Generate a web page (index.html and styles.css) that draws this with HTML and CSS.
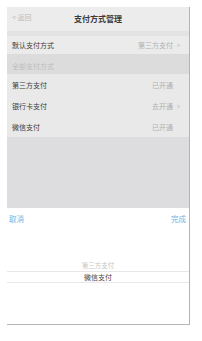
FILE: index.html
```html
<!DOCTYPE html>
<html lang="zh-CN">
<head>
<meta charset="utf-8">
<link rel="stylesheet" href="styles.css">
</head>
<body>
<div class="screen">
  <div class="nav">
    <span class="back">&lt; 返回</span>
    <span class="title">支付方式管理</span>
  </div>
  <div class="gap"></div>
  <div class="row default">
    <span class="label">默认支付方式</span>
    <span class="value">第三方支付<span class="chev">&gt;</span></span>
  </div>
  <div class="section">全部支付方式</div>
  <div class="row">
    <span class="label">第三方支付</span>
    <span class="value">已开通<span class="chev"></span></span>
  </div>
  <div class="row">
    <span class="label">银行卡支付</span>
    <span class="value">去开通<span class="chev">&gt;</span></span>
  </div>
  <div class="row">
    <span class="label">微信支付</span>
    <span class="value">已开通<span class="chev"></span></span>
  </div>
  <div class="mask"></div>
  <div class="panel">
    <div class="toolbar">
      <span class="btn">取消</span>
      <span class="btn">完成</span>
    </div>
    <div class="picker">
      <div class="item">第三方支付</div>
      <div class="item selected">微信支付</div>
    </div>
  </div>
</div>
</body>
</html>
```

FILE: styles.css
```css
html, body {
  margin: 0;
  padding: 0;
  background: #ffffff;
}
body {
  font-family: "Noto Sans CJK SC", "Noto Sans", sans-serif;
}
.screen {
  margin: 7px 0 0 7px;
  width: 182px;
  height: 317px;
  border-right: 1px solid #b4b4b4;
  border-bottom: 1px solid #b4b4b4;
  display: flex;
  flex-direction: column;
  background: #ffffff;
}
.nav {
  height: 24px;
  flex: none;
  background: #ececec;
  display: flex;
  align-items: center;
  justify-content: center;
  position: relative;
}
.back {
  position: absolute;
  left: 5px;
  top: 5px;
  font-size: 7px;
  line-height: 10px;
  color: #bdbdbd;
}
.title {
  font-size: 8px;
  font-weight: bold;
  color: #3a3a3a;
  line-height: 10px;
}
.gap {
  height: 5px;
  flex: none;
  background: #e3e3e3;
}
.row {
  height: 21px;
  flex: none;
  background: #e9e9e9;
  display: flex;
  align-items: center;
  justify-content: space-between;
  padding: 0 9px 0 5px;
  font-size: 7px;
  line-height: 10px;
}
.row.default {
  height: 18px;
  background: #ebebeb;
}
.label {
  color: #3c3c3c;
}
.value {
  color: #b0b0b0;
  display: flex;
  align-items: center;
}
.chev {
  display: inline-block;
  width: 7px;
  text-align: right;
  color: #b8b8b8;
  transform: scaleX(0.7);
  transform-origin: right center;
}
.section {
  height: 20px;
  flex: none;
  background: #dcdcdc;
  color: #bdbdbd;
  font-size: 7px;
  line-height: 10px;
  padding: 7px 0 0 5px;
  box-sizing: border-box;
}
.mask {
  flex: 1;
  background: #dddde0;
}
.panel {
  height: 116px;
  flex: none;
  background: #ffffff;
  display: flex;
  flex-direction: column;
}
.toolbar {
  height: 22px;
  display: flex;
  justify-content: space-between;
  align-items: center;
  padding: 0 3px 0 2px;
}
.btn {
  font-size: 7.5px;
  line-height: 10px;
  color: #78aee2;
}
.picker {
  padding-top: 29px;
  display: flex;
  flex-direction: column;
}
.item {
  height: 12px;
  line-height: 12px;
  text-align: center;
  font-size: 6.5px;
  color: #c6c6c6;
  box-sizing: border-box;
}
.item.selected {
  color: #444444;
  font-size: 7px;
  border-top: 1px solid #e8e8e8;
  border-bottom: 1px solid #e8e8e8;
  line-height: 10px;
}
```
